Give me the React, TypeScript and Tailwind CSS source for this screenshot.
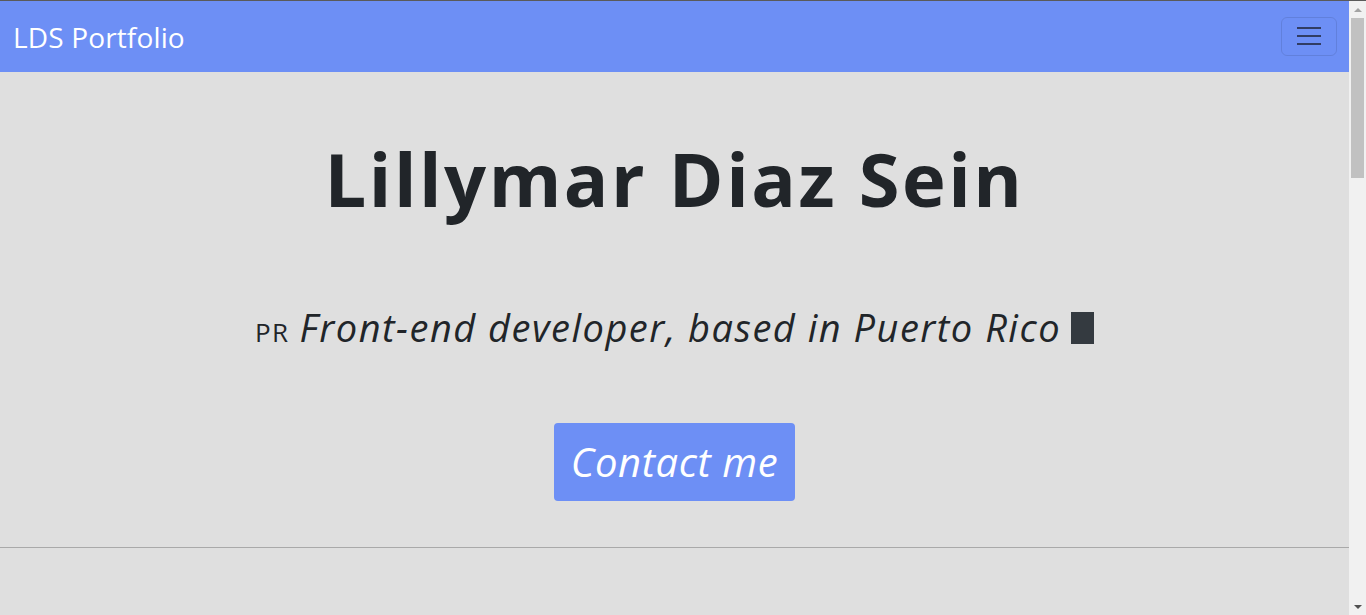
export default function App() {
  return (
    <div className="flex border-t border-[#5a5a5a] bg-[#dfdfdf] font-['Open_Sans',sans-serif] text-[#212529]">
      <div className="min-h-[1200px] flex-1">
        <Navbar />
        <Hero />
        <hr className="border-t border-[#a9a9a9]" />
      </div>
      <Scrollbar />
    </div>
  );
}

function Navbar() {
  return (
    <nav className="flex h-[71px] items-center justify-between bg-[#6d8ff5] pl-[13px] pr-[12px]">
      <span className="mt-[1px] text-[28px] leading-none tracking-[0.15px] text-white">LDS Portfolio</span>
      <button className="mt-[-1px] flex h-[39px] w-[56px] flex-col items-center justify-center gap-[6px] rounded-md border border-black/10">
        <span className="h-[2px] w-[24px] bg-[#313c63]" />
        <span className="h-[2px] w-[24px] bg-[#313c63]" />
        <span className="h-[2px] w-[24px] bg-[#313c63]" />
      </button>
    </nav>
  );
}

function Hero() {
  return (
    <section className="flex flex-col items-center pb-[46px]">
      <h1 className="mt-[70px] text-[74px] font-bold leading-none tracking-[2.5px]">Lillymar Diaz Sein</h1>
      <p className="mt-[92px] flex items-baseline leading-none">
        <span className="mr-[10px] text-[26px] tracking-[1.5px]">PR</span>
        <span className="text-[38px] italic tracking-[1.5px]">Front-end developer, based in Puerto Rico</span>
        <span className="ml-[10px] mt-[4px] h-[32px] w-[23px] self-start bg-[#343a40]" />
      </p>
      <button className="mt-[77px] h-[78px] w-[241px] rounded bg-[#6d8ff5] text-[40px] italic tracking-[0.6px] text-white">
        Contact me
      </button>
    </section>
  );
}

// browser scrollbar as it shows in the shot
function Scrollbar() {
  return (
    <div className="flex h-[614px] w-[17px] flex-col items-center bg-[#f1f1f1]">
      <div className="flex h-[17px] items-center justify-center">
        <span className="h-0 w-0 border-x-[4px] border-b-[4px] border-x-transparent border-b-[#a3a3a3]" />
      </div>
      <div className="h-[160px] w-[13px] bg-[#c1c1c1]" />
      <div className="flex-1" />
      <div className="flex h-[17px] items-center justify-center">
        <span className="h-0 w-0 border-x-[4px] border-t-[4px] border-x-transparent border-t-[#505050]" />
      </div>
    </div>
  );
}
